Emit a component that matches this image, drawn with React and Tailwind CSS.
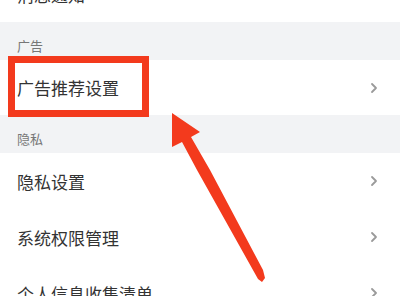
import React from 'react';

const Chevron = () => (
  <svg width="8" height="12" viewBox="0 0 8 12" className="mr-[22px]">
    <path d="M2 2 L6 6 L2 10" fill="none" stroke="#9a9a9a" strokeWidth="1.8" strokeLinecap="round" strokeLinejoin="round" />
  </svg>
);

const Row = ({ label }) => (
  <div className="h-[56px] flex items-center justify-between bg-white">
    <span className="pl-[17px] text-[17px] text-[#333333] leading-none">{label}</span>
    <Chevron />
  </div>
);

const Header = ({ label }) => (
  <div className="h-[38px] flex items-end pb-[5px] pl-[17px] bg-[#f2f3f5]">
    <span className="text-[13px] text-[#777777] leading-[18px]">{label}</span>
  </div>
);

const App = () => {
  return (
    <div
      className="relative w-[400px] h-[296px] overflow-hidden bg-white"
      style={{ fontFamily: '"Noto Sans CJK SC", "Noto Sans", sans-serif' }}
    >
      <div className="-mt-[34px]">
        <div className="h-[56px] flex items-center bg-white">
          <span className="pl-[17px] text-[17px] text-[#333333] leading-none">消息通知</span>
        </div>
        <Header label="广告" />
        <div className="h-[55px] flex items-center justify-between bg-white">
          <span className="pl-[17px] text-[17px] text-[#333333] leading-none">广告推荐设置</span>
          <Chevron />
        </div>
        <Header label="隐私" />
        <Row label="隐私设置" />
        <Row label="系统权限管理" />
        <Row label="个人信息收集清单" />
      </div>

      {/* highlight box */}
      <div className="absolute left-[8px] top-[56px] w-[141px] h-[61px] border-[7px] border-[#f33a1d]" />

      {/* arrow */}
      <svg className="absolute left-0 top-0" width="400" height="296" viewBox="0 0 400 296">
        <polygon
          points="172,113 200,132 191,137 210,170 263,270 265,278 262,282 258,279 197,170 182,142 172,147"
          fill="#f33a1d"
        />
      </svg>
    </div>
  );
};

export default App;
